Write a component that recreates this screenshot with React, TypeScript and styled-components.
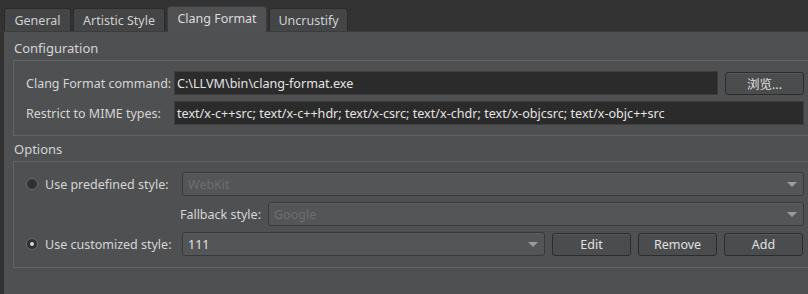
import React from 'react';
import styled, { createGlobalStyle } from 'styled-components';

const GlobalStyle = createGlobalStyle`
    html, body {
        margin: 0;
        padding: 0;
        background: #333333;
        overflow: hidden;
    }
    body {
        font-family: "Noto Sans", "Noto Sans CJK SC", sans-serif;
        font-size: 12px;
        color: #d6d6d6;
    }
`;

const Page = styled.div`
    width: 808px;
    height: 294px;
    display: flex;
    flex-direction: column;
    background: #333333;
`;

const TabBar = styled.div`
    display: flex;
    align-items: flex-end;
    gap: 2px;
    height: 31px;
    padding-left: 4px;
    box-sizing: border-box;
`;

const Tab = styled.div<{ $active?: boolean; $width: number }>`
    width: ${p => p.$width}px;
    height: ${p => (p.$active ? 26 : 23)}px;
    box-sizing: border-box;
    display: flex;
    align-items: center;
    justify-content: center;
    padding-bottom: ${p => (p.$active ? 3 : 0)}px;
    background: ${p => (p.$active ? '#505153' : '#444546')};
    border: 1px solid ${p => (p.$active ? '#3c3c3c' : '#2c2c2c')};
    border-bottom: none;
    border-radius: 3px 3px 0 0;
    color: ${p => (p.$active ? '#dcdcdc' : '#d0d0d0')};
    font-size: 12.5px;
    margin-bottom: ${p => (p.$active ? -1 : 0)}px;
    position: relative;
    z-index: ${p => (p.$active ? 1 : 0)};
`;

const Panel = styled.div`
    flex: 1;
    margin-left: 3px;
    background: #4f5052;
    border-left: 1px solid #2e2e2e;
    border-top: 1px solid #3c3c3c;
    padding: 6px 0 0 9px;
    display: flex;
    flex-direction: column;
`;

const GroupTitle = styled.div`
    font-size: 13px;
    color: #d4d4d4;
    height: 22px;
    line-height: 20px;
    padding-left: 1px;
`;

const Group = styled.div<{ $padBottom: number }>`
    border-top: 1px solid #626365;
    border-left: 1px solid #626365;
    border-bottom: 1px solid #626365;
    padding: 10px 4px ${p => p.$padBottom}px 12px;
    display: flex;
    flex-direction: column;
    gap: 6px;
    margin-bottom: 3px;
`;

const Row = styled.div`
    display: flex;
    align-items: center;
    gap: 7px;
    height: 24px;
`;

const Label = styled.div<{ $width?: number; $right?: boolean }>`
    width: ${p => (p.$width ? `${p.$width}px` : 'auto')};
    flex-shrink: 0;
    text-align: ${p => (p.$right ? 'right' : 'left')};
    color: #d6d6d6;
    font-size: 12.5px;
    white-space: nowrap;
`;

const TextField = styled.div`
    flex: 1;
    height: 24px;
    box-sizing: border-box;
    background: #2b2b2b;
    border: 1px solid #3e3e3e;
    color: #e4e4e4;
    padding: 0 2px;
    display: flex;
    align-items: center;
    font-size: 12.6px;
    white-space: nowrap;
    overflow: hidden;
`;

const Button = styled.div`
    width: 79px;
    height: 23px;
    flex-shrink: 0;
    box-sizing: border-box;
    background: #4b4c4e;
    border: 1px solid #2c2c2c;
    border-radius: 3px;
    box-shadow: inset 0 1px 0 #58595b;
    display: flex;
    align-items: center;
    justify-content: center;
    color: #e0e0e0;
    font-size: 12.5px;
`;

const Combo = styled.div<{ $disabled?: boolean; $width?: number }>`
    ${p => (p.$width ? `width: ${p.$width}px; flex-shrink: 0;` : 'flex: 1;')}
    height: 24px;
    box-sizing: border-box;
    background: #545557;
    border: 1px solid #38393a;
    border-radius: 3px;
    box-shadow: inset 0 1px 0 #5c5d5f;
    display: flex;
    align-items: center;
    padding: 0 5px;
    color: ${p => (p.$disabled ? '#6d6e70' : '#e2e2e2')};
    font-size: 12.5px;
`;

const ComboText = styled.span`
    flex: 1;
`;

const Arrow = styled.span`
    width: 0;
    height: 0;
    border-left: 5px solid transparent;
    border-right: 5px solid transparent;
    border-top: 5px solid #9a9a9a;
    margin-right: 1px;
`;

const RadioLabel = styled.div`
    width: 149px;
    flex-shrink: 0;
    display: flex;
    align-items: center;
    gap: 7px;
    color: #d6d6d6;
    font-size: 12.5px;
    white-space: nowrap;
`;

const Radio = styled.span<{ $checked?: boolean }>`
    width: 12px;
    height: 12px;
    flex-shrink: 0;
    box-sizing: border-box;
    border-radius: 50%;
    background: #2f2f30;
    border: 1px solid #6a6b6d;
    display: flex;
    align-items: center;
    justify-content: center;
    &::after {
        content: '';
        width: 4px;
        height: 4px;
        border-radius: 50%;
        background: ${p => (p.$checked ? '#d8d8d8' : 'transparent')};
    }
`;

const App: React.FC = () => {
    return (
        <Page>
            <GlobalStyle />
            <TabBar>
                <Tab $width={67}>General</Tab>
                <Tab $width={92}>Artistic Style</Tab>
                <Tab $width={100} $active>Clang Format</Tab>
                <Tab $width={79}>Uncrustify</Tab>
            </TabBar>
            <Panel>
                <GroupTitle>Configuration</GroupTitle>
                <Group $padBottom={10}>
                    <Row>
                        <Label $width={141}>Clang Format command:</Label>
                        <TextField>C:\LLVM\bin\clang-format.exe</TextField>
                        <Button>浏览...</Button>
                    </Row>
                    <Row>
                        <Label $width={141}>Restrict to MIME types:</Label>
                        <TextField>text/x-c++src; text/x-c++hdr; text/x-csrc; text/x-chdr; text/x-objcsrc; text/x-objc++src</TextField>
                    </Row>
                </Group>
                <GroupTitle>Options</GroupTitle>
                <Group $padBottom={11}>
                    <Row>
                        <RadioLabel><Radio />Use predefined style:</RadioLabel>
                        <Combo $disabled><ComboText>WebKit</ComboText><Arrow /></Combo>
                    </Row>
                    <Row>
                        <Label $width={235} $right>Fallback style:</Label>
                        <Combo $disabled><ComboText>Google</ComboText><Arrow /></Combo>
                    </Row>
                    <Row>
                        <RadioLabel><Radio $checked />Use customized style:</RadioLabel>
                        <Combo $width={363}><ComboText>111</ComboText><Arrow /></Combo>
                        <Button>Edit</Button>
                        <Button>Remove</Button>
                        <Button>Add</Button>
                    </Row>
                </Group>
            </Panel>
        </Page>
    );
};

export default App;
